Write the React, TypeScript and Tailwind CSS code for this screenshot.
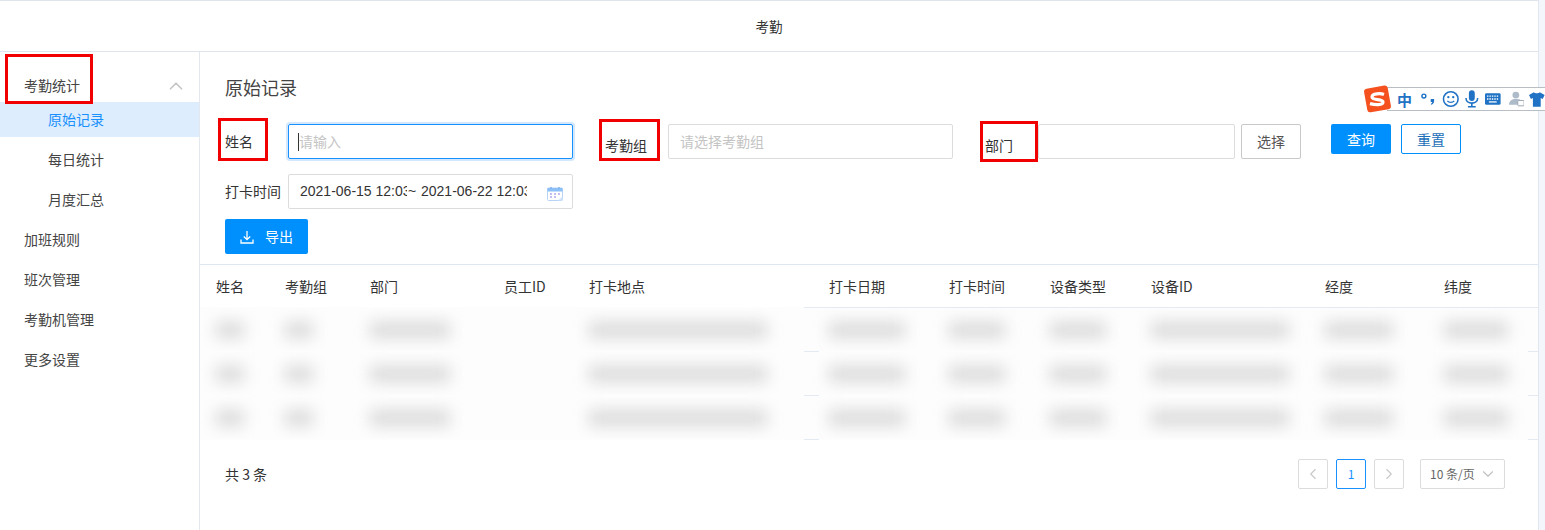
import * as React from "react"
import { ChevronUp, ChevronDown, ChevronLeft, ChevronRight } from "lucide-react"

const columns = [
  { title: "姓名", bar: "w-[28px]" },
  { title: "考勤组", bar: "w-[28px]" },
  { title: "部门", bar: "w-[80px]" },
  { title: "员工ID", bar: "w-0" },
  { title: "打卡地点", bar: "w-[178px]" },
  { title: "打卡日期", bar: "w-[76px]" },
  { title: "打卡时间", bar: "w-[56px]" },
  { title: "设备类型", bar: "w-[56px]" },
  { title: "设备ID", bar: "w-[138px]" },
  { title: "经度", bar: "w-[68px]" },
  { title: "纬度", bar: "w-[64px]" },
]

const gridCols = "grid grid-cols-[69px_85px_134px_85px_240px_120px_101px_101px_174px_119px_1fr] pl-4"

const RedBox = ({ className }: { className: string }) => (
  <div className={`absolute border-[3px] border-[#f00000] ${className}`}></div>
)

const SogouBar = () => (
  <div className="absolute left-[1363px] top-[84px] flex h-[30px] items-center">
    <svg width="30" height="30" viewBox="0 0 30 30" className="relative z-10">
      <rect x="2.500" y="3" width="24" height="24" rx="3" fill="#f4511e" transform="rotate(-10 14 15)" />
      <path d="M21 10.500c-3-1.200-12-1.400-12 2.500 0 3.600 11 1.500 11 5 0 3.500-8 3-13 1.600" fill="none" stroke="#fff" strokeWidth="3.200" />
    </svg>
    <div className="ml-[-6px] flex h-[24px] w-[158px] items-center border-y border-[#b9bdc4] bg-white pl-[10px] text-[#1f72c4]">
      <span className="w-[23px] text-[15px] font-bold leading-none">中</span>
      <svg width="22" height="16" viewBox="0 0 22 16">
        <circle cx="5" cy="5" r="2" fill="none" stroke="#1f72c4" strokeWidth="1.500" />
        <path d="M12 8h3.500v2c0 2-1 3-3 4l-.5-1c1-.5 1.500-1.200 1.500-2H12z" fill="#1f72c4" />
      </svg>
      <svg width="18" height="18" viewBox="0 0 18 18" className="ml-px">
        <circle cx="9" cy="9" r="7.500" fill="none" stroke="#1f72c4" strokeWidth="1.600" />
        <circle cx="6.500" cy="7" r="1.200" fill="#1f72c4" />
        <circle cx="11.500" cy="7" r="1.200" fill="#1f72c4" />
        <path d="M5.500 11c1.500 2 5.500 2 7 0" fill="none" stroke="#1f72c4" strokeWidth="1.400" />
      </svg>
      <svg width="14" height="18" viewBox="0 0 14 18" className="ml-[6px]">
        <rect x="4" y="0" width="6" height="11" rx="3" fill="#1f72c4" />
        <path d="M1 8c0 7 12 7 12 0" fill="none" stroke="#1f72c4" strokeWidth="1.600" />
        <path d="M7 13v4M3 17h8" stroke="#1f72c4" strokeWidth="1.600" />
      </svg>
      <svg width="16" height="12" viewBox="0 0 16 12" className="ml-[6px]">
        <rect x="0" y="0" width="16" height="12" rx="1.500" fill="#1f72c4" />
        <path d="M2 3h12M2 6h12" stroke="#fff" strokeWidth="1.300" strokeDasharray="1.500 1" />
        <path d="M4 9h8" stroke="#fff" strokeWidth="1.300" />
      </svg>
      <svg width="16" height="16" viewBox="0 0 16 16" className="ml-[8px]">
        <circle cx="7" cy="4" r="3.500" fill="#aebbc9" />
        <path d="M0 14c0-4 3-6 7-6s5 1 5 2v4z" fill="#aebbc9" />
        <rect x="9" y="9.500" width="6.500" height="5.500" rx="1" fill="#fff" stroke="#9aa7b5" />
      </svg>
      <svg width="16" height="15" viewBox="0 0 16 15" className="ml-[5px]">
        <path d="M5 0 0 3l2 4 2-1v9h8V6l2 1 2-4-5-3c-1 1.500-5 1.500-6 0z" fill="#1f72c4" />
      </svg>
    </div>
  </div>
)

const CalendarIcon = () => (
  <svg width="16" height="15" viewBox="0 0 16 15" className="absolute right-[9px] top-[11px]">
    <rect x="0.500" y="2" width="15" height="12.500" rx="1" fill="#fff" stroke="#b7d3f7" />
    <rect x="0.500" y="2" width="15" height="3.500" fill="#8cc0f7" />
    <path d="M4 1v2M12 1v2" stroke="#7fb4f0" strokeWidth="1.500" />
    <path d="M3 8h2M7 8h2M11 8h2M3 11h2M7 11h2" stroke="#b3a8f0" strokeWidth="1.300" />
    <path d="M11 14.500l4.500-4v4z" fill="#cfe2fa" />
  </svg>
)

const ExportIcon = () => (
  <svg width="14" height="14" viewBox="0 0 14 14" fill="none" stroke="#fff" strokeWidth="1.300">
    <path d="M7 1v8.500M3.800 6.500 7 9.700l3.200-3.200M1 9.500V13h12V9.500" />
  </svg>
)

const SideItem = ({ children, active }: { children: React.ReactNode; active?: boolean }) => (
  <div
    className={`mb-[5px] flex h-[35px] items-center pb-px pl-12 ${active ? "bg-[#ddedfe] text-[#1890ff]" : "text-[#444]"}`}
  >
    {children}
  </div>
)

const Separator = ({ first }: { first?: boolean }) => (
  <div className="flex h-px">
    <div className="w-[604px] bg-[#fdfdfd]"></div>
    <div className="w-[15px] bg-[#e3eaf2]"></div>
    <div className={`w-[709px] ${first ? "bg-[#e3eaf2]" : "bg-[#fdfdfd]"}`}></div>
    <div className="flex-1 bg-[#e3eaf2]"></div>
  </div>
)

const App = () => {
  return (
    <div className="relative flex h-[530px] w-[1545px] overflow-hidden bg-white font-['Noto_Sans_CJK_SC','Liberation_Sans',sans-serif] text-[14px] text-[#333]">
      <div className="flex w-[1538px] flex-col border-t border-[#dfe5ec]">
        <header className="flex h-[51px] shrink-0 items-center justify-center border-b border-[#dfe5ec] text-[13.5px]">
          考勤
        </header>
        <div className="flex flex-1">
          {/* Sidebar */}
          <aside className="w-[200px] shrink-0 border-r border-[#e3e8ef] pt-[16px]">
            <div className="flex h-[34px] items-center justify-between pl-6 pr-[12px] text-[#444]">
              <span>考勤统计</span>
              <ChevronUp className="mt-[2px] h-[22px] w-[22px] text-[#c4c4c4]" strokeWidth={1.800} />
            </div>
            <SideItem active>原始记录</SideItem>
            <SideItem>每日统计</SideItem>
            <SideItem>月度汇总</SideItem>
            {["加班规则", "班次管理", "考勤机管理", "更多设置"].map(item => (
              <div key={item} className="mb-[5px] flex h-[35px] items-center pb-px pl-6 text-[#444]">
                {item}
              </div>
            ))}
          </aside>

          {/* Main */}
          <main className="flex min-w-0 flex-1 flex-col">
            <div className="px-[25px] pt-[21px]">
              <h1 className="text-[18px] leading-[28px] text-[#444]">原始记录</h1>
              <div className="mt-[23px] flex h-[35px] items-start">
                <label className="flex h-[35px] w-[63px] shrink-0 items-center">姓名</label>
                <div className="flex h-[35px] w-[285px] shrink-0 items-center rounded-[2px] border border-[#1890ff] pl-[9px] text-[#c4c4c4] shadow-[0_0_0_2px_#d3e8fd]">
                  <span className="h-[18px] w-px bg-[#333]"></span>
                  请输入
                </div>
                <label className="ml-[32px] flex h-[35px] w-[63px] shrink-0 items-center pt-[7px]">考勤组</label>
                <div className="flex h-[35px] w-[285px] shrink-0 items-center rounded-[2px] border border-[#dcdcdc] pl-[11px] text-[#c4c4c4]">
                  请选择考勤组
                </div>
                <label className="ml-[32px] flex h-[35px] w-[53px] shrink-0 items-center pt-[7px]">部门</label>
                <div className="h-[35px] w-[197px] shrink-0 rounded-[2px] border border-[#dcdcdc]"></div>
                <button className="ml-[6px] h-[35px] w-[60px] shrink-0 rounded-[2px] border border-[#c8c8c8] text-[#555]">
                  选择
                </button>
                <button className="ml-[30px] h-[30px] w-[60px] shrink-0 rounded-[2px] bg-[#0090fd] text-white">
                  查询
                </button>
                <button className="ml-[10px] h-[30px] w-[60px] shrink-0 rounded-[2px] border border-[#0090fd] text-[#1b6fb8]">
                  重置
                </button>
              </div>
              <div className="mt-[15px] flex h-[35px] items-center">
                <label className="w-[63px] shrink-0">打卡时间</label>
                <div className="relative flex h-[35px] w-[285px] shrink-0 items-center rounded-[2px] border border-[#dcdcdc] pl-[11px] font-['Liberation_Sans',sans-serif] text-[14px]">
                  <span className="w-[107px] overflow-hidden whitespace-nowrap">2021-06-15 12:03</span>
                  <span className="ml-px w-[13px]">~</span>
                  <span className="w-[106px] overflow-hidden whitespace-nowrap">2021-06-22 12:03</span>
                  <CalendarIcon />
                </div>
              </div>
              <button className="mt-[10px] flex h-[35px] w-[83px] items-center justify-center gap-[11px] rounded-[2px] bg-[#0090fd] text-white">
                <ExportIcon />
                导出
              </button>
            </div>

            {/* Table */}
            <div className="mt-[10px] border-t border-[#dfe7f0]">
              <div className={`${gridCols} h-[42px] items-center`}>
                {columns.map(col => (
                  <div key={col.title}>{col.title}</div>
                ))}
              </div>
              <Separator first />
              {[0, 1, 2].map(row => (
                <div key={row}>
                  <div className={`${gridCols} h-[43px] items-center overflow-hidden bg-[#fdfdfd]`}>
                    {columns.map(col => (
                      <div key={col.title} className={`h-[16px] bg-[#d9d9d9] blur-[8px] ${col.bar}`}></div>
                    ))}
                  </div>
                  <Separator />
                </div>
              ))}
            </div>

            {/* Pagination */}
            <div className="mt-[19px] flex h-[30px] items-center justify-between pl-[25px] pr-[33px]">
              <span>共 3 条</span>
              <div className="flex items-center text-[#666]">
                <div className="flex h-[30px] w-[30px] items-center justify-center rounded-[2px] border border-[#dcdcdc]">
                  <ChevronLeft className="h-[18px] w-[18px] text-[#c8c8c8]" strokeWidth={1.500} />
                </div>
                <div className="ml-2 flex h-[30px] w-[30px] items-center justify-center rounded-[2px] border border-[#1890ff] text-xs text-[#1890ff]">
                  1
                </div>
                <div className="ml-2 flex h-[30px] w-[30px] items-center justify-center rounded-[2px] border border-[#dcdcdc]">
                  <ChevronRight className="h-[18px] w-[18px] text-[#c8c8c8]" strokeWidth={1.500} />
                </div>
                <div className="ml-4 flex h-[30px] w-[85px] items-center justify-between rounded-[2px] border border-[#dcdcdc] pl-[9px] pr-[7px] text-xs">
                  10 条/页
                  <ChevronDown className="h-[18px] w-[18px] text-[#c0c0c0]" strokeWidth={1.500} />
                </div>
              </div>
            </div>
          </main>
        </div>
      </div>

      {/* Page scroll strip */}
      <div className="w-[7px] border-l border-[#dfe7f0] bg-[#f3f7fc]"></div>

      {/* Red annotation boxes */}
      <RedBox className="left-[5px] top-[54px] h-[50px] w-[88px]" />
      <RedBox className="left-[218px] top-[118px] h-[43px] w-[50px]" />
      <RedBox className="left-[599px] top-[119px] h-[42px] w-[61px]" />
      <RedBox className="left-[980px] top-[121px] h-[41px] w-[58px]" />

      <SogouBar />
    </div>
  )
}

export default App
